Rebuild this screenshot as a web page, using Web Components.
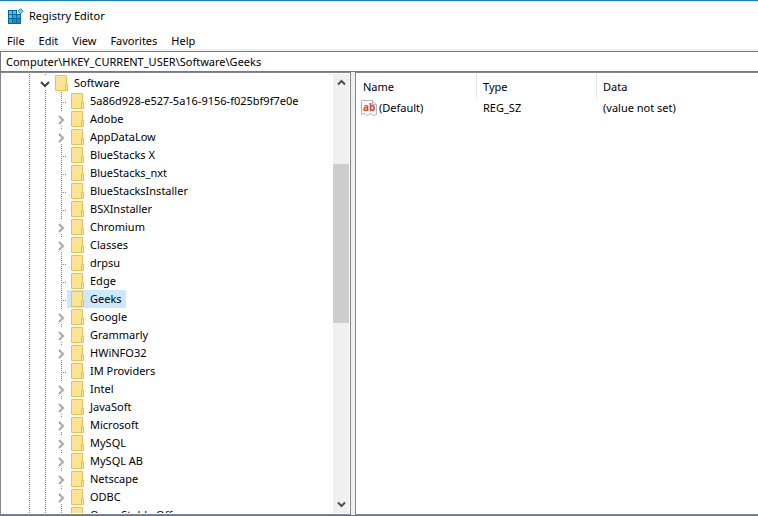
<!DOCTYPE html>
<html lang="en">
<head>
<meta charset="UTF-8">
<meta name="viewport" content="width=device-width, initial-scale=1">
<title>Registry Editor</title>
<style>
  html, body { height: 100%; margin: 0; }
  body {
    font: 11px/18px "Noto Sans", "Open Sans", sans-serif;
    color: #000;
    background: #fff;
    overflow: hidden;
  }
</style>
</head>
<body>
<reg-window>
  <reg-title slot="title">Registry Editor</reg-title>
  <reg-menu slot="menu"></reg-menu>
  <reg-address slot="address" path="Computer\HKEY_CURRENT_USER\Software\Geeks"></reg-address>
  <reg-tree slot="tree"></reg-tree>
  <reg-values slot="values"></reg-values>
</reg-window>

<script>
class RegWindow extends HTMLElement {
  constructor() {
    super();
    this.attachShadow({ mode: 'open' });
    this.shadowRoot.innerHTML = `
      <style>
        :host {
          display: flex;
          flex-direction: column;
          box-sizing: border-box;
          height: 100vh;
          border-top: 1px solid #1a7fd4;
          border-bottom: 1px solid #2a84cf;
        }
        main {
          flex: 1;
          min-height: 0;
          display: grid;
          grid-template-columns: 351px minmax(0, 1fr);
          column-gap: 4px;
          background: #f0f0f0;
        }
        ::slotted([slot="tree"]), ::slotted([slot="values"]) { min-height: 0; }
      </style>
      <slot name="title"></slot>
      <slot name="menu"></slot>
      <slot name="address"></slot>
      <main>
        <slot name="tree"></slot>
        <slot name="values"></slot>
      </main>
    `;
  }
}

class RegTitle extends HTMLElement {
  constructor() {
    super();
    this.attachShadow({ mode: 'open' });
    this.shadowRoot.innerHTML = `
      <style>
        :host { display: flex; align-items: center; gap: 5px; height: 30px; padding-left: 8px; }
        h1 { margin: 0; font: inherit; }
        svg { display: block; }
      </style>
      <svg width="16" height="16" viewBox="0 0 16 16" aria-hidden="true">
        <path fill="#0b6798" d="M0 2h9v4h4v10H0z"/>
        <path fill="#4cc4f5" d="M1 3h3v3H1zM5 3h3v3H5zM1 7h3v3H1z"/>
        <path fill="#2ba6e0" d="M5 7h3v3H5zM9 7h3v3H9zM1 11h3v4H1z"/>
        <path fill="#1a8bc6" d="M5 11h3v4H5zM9 11h3v4H9z"/>
        <path fill="#7fd3f5" stroke="#2b86b5" d="M12.500 .7l2.600 2.600-2.600 2.600-2.600-2.600z"/>
      </svg>
      <h1><slot></slot></h1>
    `;
  }
}

class RegMenu extends HTMLElement {
  constructor() {
    super();
    this.items = ['File', 'Edit', 'View', 'Favorites', 'Help'];
    this.attachShadow({ mode: 'open' });
    this.shadowRoot.innerHTML = `
      <style>
        :host { display: block; border-bottom: 2px solid #f0f0f0; }
        nav { display: flex; height: 17px; padding-top: 1px; }
        button {
          padding: 0 7px;
          border: 0;
          background: none;
          font: inherit;
          color: inherit;
        }
        button:hover { background: #cce8ff; }
      </style>
      <nav>${this.items.map(item => `<button type="button">${item}</button>`).join('')}</nav>
    `;
  }
}

class RegAddress extends HTMLElement {
  constructor() {
    super();
    this.attachShadow({ mode: 'open' });
    this.shadowRoot.innerHTML = `
      <style>
        :host { display: block; }
        input {
          display: block;
          box-sizing: border-box;
          width: 100%;
          height: 21px;
          padding: 0 5px;
          border: 1px solid #7a7a7a;
          border-right: 0;
          outline: 0;
          font: inherit;
          color: inherit;
          background: #fff;
        }
      </style>
      <input type="text" aria-label="Address" spellcheck="false">
    `;
    this.shadowRoot.querySelector('input').value = this.getAttribute('path');
  }
}

class RegKey extends HTMLElement {
  connectedCallback() {
    const level = Number(this.getAttribute('level'));
    const state = this.getAttribute('state');
    const name = this.textContent;
    this.attachShadow({ mode: 'open' });
    this.shadowRoot.innerHTML = `
      <style>
        :host { display: flex; height: 18px; white-space: nowrap; }
        .guide, .branch {
          flex: none;
          width: 16px;
          background: repeating-linear-gradient(#808080 0 1px, transparent 1px 2px) 8px 0 / 1px 100% no-repeat;
        }
        .branch { display: flex; align-items: center; justify-content: center; width: 14px; }
        .leaf {
          background:
            repeating-linear-gradient(#808080 0 1px, transparent 1px 2px) 8px 0 / 1px 100% no-repeat,
            repeating-linear-gradient(90deg, #808080 0 1px, transparent 1px 2px) 8px 10px / 6px 1px no-repeat;
        }
        button {
          display: flex;
          align-items: center;
          justify-content: center;
          width: 12px;
          height: 14px;
          padding: 2px 0 0 1px;
          border: 0;
          background: #fff;
          color: #a6a6a6;
        }
        button.open { color: #404040; }
        .node { display: flex; align-items: center; gap: 3px; padding: 0 4px; }
        .node.selected { background: #cce8ff; }
        svg { display: block; flex: none; }
      </style>
      ${'<span class="guide"></span>'.repeat(level + 1)}
      <span class="branch ${state ? '' : 'leaf'}">${this.expander(state, name)}</span>
      <span class="node ${this.hasAttribute('selected') ? 'selected' : ''}">
        <svg width="16" height="18" viewBox="0 0 16 18" aria-hidden="true">
          <path fill="#ffe394" stroke="#e8c347" d="M.5 1.500h11v15H.5z"/>
          <path fill="#ffe394" stroke="#e8c347" d="M10.500 10.500h2v6h-2z"/>
        </svg>
        <slot></slot>
      </span>
    `;
  }

  expander(state, name) {
    if (!state) return '';
    const shape = state === 'open' ? 'M1 3l4 4 4-4' : 'M3 1l4 4-4 4';
    return `
      <button type="button" class="${state}" aria-label="Toggle ${name}">
        <svg width="10" height="10" viewBox="0 0 10 10">
          <path fill="none" stroke="currentColor" stroke-width="2" d="${shape}"/>
        </svg>
      </button>`;
  }
}

class RegTree extends HTMLElement {
  constructor() {
    super();
    this.keys = [
      ['5a86d928-e527-5a16-9156-f025bf9f7e0e'],
      ['Adobe', 'closed'],
      ['AppDataLow', 'closed'],
      ['BlueStacks X'],
      ['BlueStacks_nxt'],
      ['BlueStacksInstaller'],
      ['BSXInstaller'],
      ['Chromium', 'closed'],
      ['Classes', 'closed'],
      ['drpsu'],
      ['Edge'],
      ['Geeks'],
      ['Google', 'closed'],
      ['Grammarly', 'closed'],
      ['HWiNFO32', 'closed'],
      ['IM Providers'],
      ['Intel', 'closed'],
      ['JavaSoft', 'closed'],
      ['Microsoft', 'closed'],
      ['MySQL', 'closed'],
      ['MySQL AB', 'closed'],
      ['Netscape', 'closed'],
      ['ODBC', 'closed'],
      ['Open Stable Off'],
    ];
    this.selected = 'Geeks';
    this.attachShadow({ mode: 'open' });
    this.shadowRoot.innerHTML = `
      <style>
        :host {
          display: flex;
          box-sizing: border-box;
          padding: 1px;
          border: 1px solid #828790;
          background: #fff;
        }
        .keys { flex: 1; min-width: 0; overflow: hidden; padding-left: 19px; }
        .scroll {
          display: grid;
          grid-template-rows: 17px 73fr 159px 173fr 17px;
          width: 16px;
          background: #f0f0f0;
        }
        .scroll button {
          display: flex;
          align-items: center;
          justify-content: center;
          padding: 0;
          border: 0;
          background: none;
          color: #505050;
        }
        .thumb { grid-row: 3; background: #cdcdcd; }
        .down { grid-row: 5; }
      </style>
      <div class="keys">
        <reg-key level="0" state="open">Software</reg-key>
        ${this.keys.map(([name, state]) => this.row(name, state)).join('')}
      </div>
      <div class="scroll">
        <button type="button" aria-label="Scroll up">
          <svg width="9" height="9" viewBox="0 0 9 9"><path fill="none" stroke="currentColor" stroke-width="2" d="M1 6.500l3.500-3.500L8 6.500"/></svg>
        </button>
        <div class="thumb"></div>
        <button type="button" class="down" aria-label="Scroll down">
          <svg width="9" height="9" viewBox="0 0 9 9"><path fill="none" stroke="currentColor" stroke-width="2" d="M1 2.500L4.500 6 8 2.500"/></svg>
        </button>
      </div>
    `;
  }

  row(name, state) {
    return `<reg-key level="1" ${state ? `state="${state}"` : ''} ${name === this.selected ? 'selected' : ''}>${name}</reg-key>`;
  }
}

class RegValues extends HTMLElement {
  constructor() {
    super();
    this.attachShadow({ mode: 'open' });
    this.shadowRoot.innerHTML = `
      <style>
        :host {
          display: block;
          box-sizing: border-box;
          padding-top: 1px;
          border: 1px solid #828790;
          border-right: 0;
          background: #fff;
        }
        table { width: 100%; border-spacing: 0; table-layout: fixed; }
        .name-col { width: 121px; }
        .type-col { width: 120px; }
        th, td { padding: 0 0 0 6px; text-align: left; }
        th { height: 25px; box-sizing: border-box; border-right: 1px solid #e5e5e5; font-weight: normal; }
        th:first-child { padding-left: 7px; }
        th:last-child { border-right: 0; }
        td { height: 18px; }
        td:first-child { padding-left: 5px; }
        .name { display: flex; align-items: center; gap: 2px; }
        svg { display: block; flex: none; }
        svg text { font: bold 10px "Open Sans", sans-serif; fill: #d9431e; }
      </style>
      <table>
        <colgroup><col class="name-col"><col class="type-col"><col></colgroup>
        <thead><tr><th>Name</th><th>Type</th><th>Data</th></tr></thead>
        <tbody>
          <tr>
            <td>
              <span class="name">
                <svg width="16" height="16" viewBox="0 0 16 16" aria-hidden="true">
                  <path fill="#fafafa" stroke="#b4b4b4" d="M.5.500h11l4 4v10l-3 1-3-2-3 2-3-2-3 1z"/>
                  <path fill="#e8e8e8" stroke="#b4b4b4" d="M11.500.500v4h4"/>
                  <text x="2" y="11">ab</text>
                </svg>
                (Default)
              </span>
            </td>
            <td>REG_SZ</td>
            <td>(value not set)</td>
          </tr>
        </tbody>
      </table>
    `;
  }
}

customElements.define('reg-window', RegWindow);
customElements.define('reg-title', RegTitle);
customElements.define('reg-menu', RegMenu);
customElements.define('reg-address', RegAddress);
customElements.define('reg-key', RegKey);
customElements.define('reg-tree', RegTree);
customElements.define('reg-values', RegValues);
</script>
</body>
</html>
